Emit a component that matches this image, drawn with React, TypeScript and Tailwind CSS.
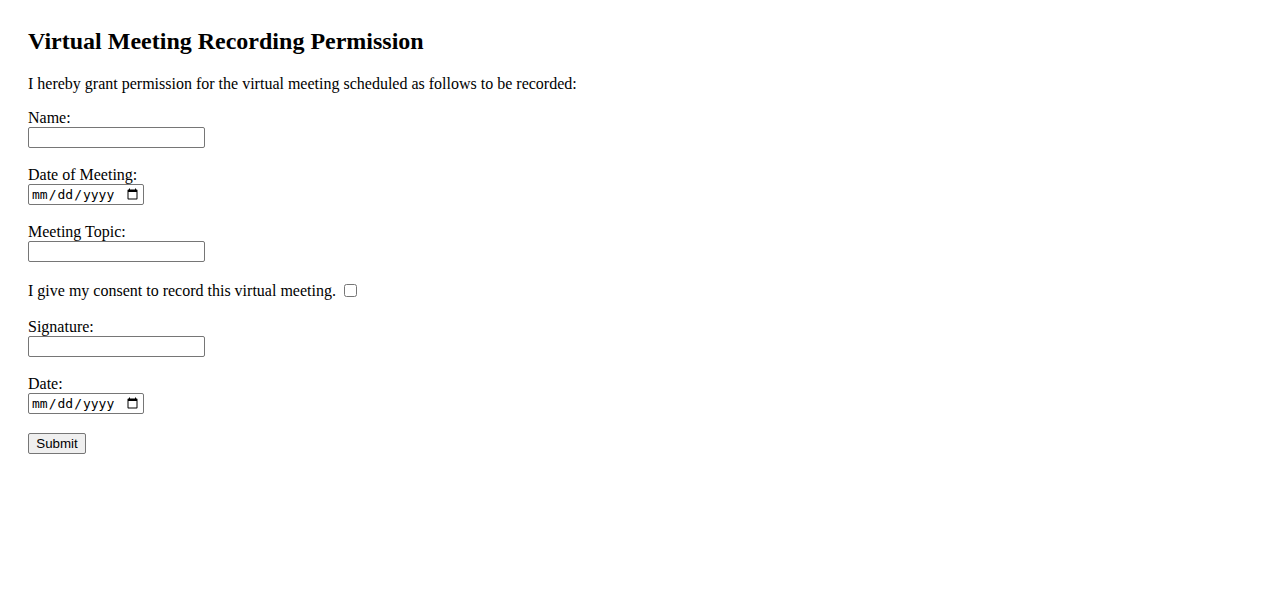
import React, { useState } from 'react';

const serif = "font-['Liberation_Serif','Times_New_Roman',serif]";
const textInput =
  'block w-[177px] h-[21px] border border-[#767676] rounded-[2px] bg-white px-[2px] py-[1px] text-[13.33px] font-[Arial,sans-serif] text-black';
const dateInput =
  "block w-[116px] h-[21px] border border-[#767676] rounded-[2px] bg-white px-[2px] py-[1px] text-[13px] font-['DejaVu_Sans_Mono',monospace] text-black";

const Field: React.FC<{ label: string; className?: string; children: React.ReactNode }> = ({
  label,
  className = '',
  children,
}) => (
  <div className={className}>
    <label className="block leading-[18px]">{label}</label>
    {children}
  </div>
);

export default function App() {
  const [name, setName] = useState('');
  const [topic, setTopic] = useState('');
  const [signature, setSignature] = useState('');
  const [consent, setConsent] = useState(false);

  return (
    <div className={`min-h-screen bg-white text-black text-[16px] px-[28px] pt-[27px] ${serif}`}>
      <h2 className="text-[24px] font-bold leading-[28px]">Virtual Meeting Recording Permission</h2>
      <p className="mt-[20px] leading-[18px]">
        I hereby grant permission for the virtual meeting scheduled as follows to be recorded:
      </p>

      <form onSubmit={(e) => e.preventDefault()}>
        <Field label="Name:" className="mt-[16px]">
          <input type="text" className={textInput} value={name} onChange={(e) => setName(e.target.value)} />
        </Field>

        <Field label="Date of Meeting:" className="mt-[18px]">
          <input type="date" className={dateInput} />
        </Field>

        <Field label="Meeting Topic:" className="mt-[18px]">
          <input type="text" className={textInput} value={topic} onChange={(e) => setTopic(e.target.value)} />
        </Field>

        <div className="mt-[20px] flex items-center h-[18px]">
          <span className="leading-[18px]">I give my consent to record this virtual meeting.</span>
          <input
            type="checkbox"
            className="ml-[8px] w-[13px] h-[13px] -mt-[2px]"
            checked={consent}
            onChange={(e) => setConsent(e.target.checked)}
          />
        </div>

        <Field label="Signature:" className="mt-[18px]">
          <input
            type="text"
            className={textInput}
            value={signature}
            onChange={(e) => setSignature(e.target.value)}
          />
        </Field>

        <Field label="Date:" className="mt-[18px]">
          <input type="date" className={dateInput} />
        </Field>

        {/* submit */}
        <button
          type="submit"
          className="mt-[19px] block w-[58px] h-[21px] border border-[#767676] rounded-[2px] bg-[#efefef] px-[6px] py-[1px] text-[13.33px] leading-[17px] font-[Arial,sans-serif] text-black"
        >
          Submit
        </button>
      </form>
    </div>
  );
}
